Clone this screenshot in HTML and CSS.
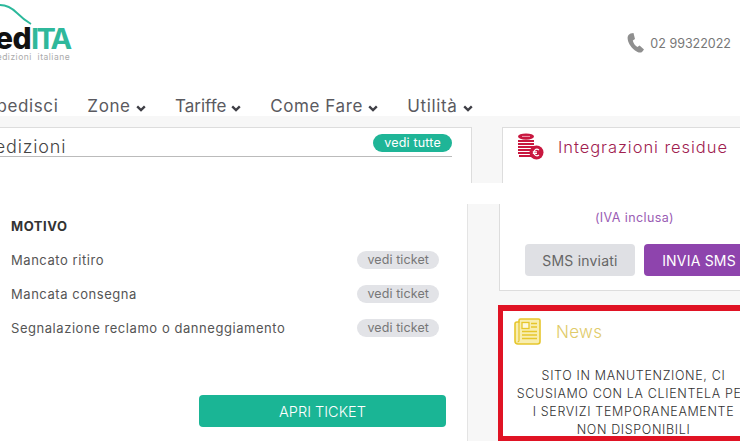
FILE: index.html
```html
<!DOCTYPE html>
<html lang="it">
<head>
    <meta charset="UTF-8">
    <meta name="viewport" content="width=device-width, initial-scale=1.0">
    <title>SpedITA - Spedizioni italiane</title>
    <link rel="stylesheet" href="styles.css">
</head>
<body>
    <header class="header">
        <div class="logo">
            <svg class="logo-arc" width="34" height="26" viewBox="0 0 34 26">
                <path d="M0 5 C7 5 12 8 17 13 C21 17 26 21 31 24" fill="none" stroke="#2bb89b" stroke-width="1.8"/>
            </svg>
            <div class="logo-name"><span class="logo-dark">Sped</span><span class="logo-teal">ITA</span></div>
            <div class="logo-sub">spedizioni&nbsp; italiane</div>
        </div>
        <div class="phone">
            <svg width="18" height="20" viewBox="0 0 18 20">
                <path d="M3.5 .5 L6.5 0 L8 6 L5.8 7.6 C6.2 10 8 12.8 10.4 14 L12.6 12.6 L17 16.6 L15 19 C13.5 20.2 10.5 19.6 8 17.6 C3 13.6 .5 8.5 .6 4.5 C.7 2.6 2 1.2 3.5 .5 Z" fill="#8f8f8f"/>
            </svg>
            <span>02 99322022</span>
        </div>
    </header>

    <nav class="nav">
        <a class="nav-item">Spedisci</a>
        <a class="nav-item">Zone <svg class="chev" width="10" height="7" viewBox="0 0 10 7"><path d="M1.2 1.4 L5 5 L8.8 1.4" fill="none" stroke="#3f3f46" stroke-width="2.4"/></svg></a>
        <a class="nav-item nav-tight">Tariffe <svg class="chev" width="10" height="7" viewBox="0 0 10 7"><path d="M1.2 1.4 L5 5 L8.8 1.4" fill="none" stroke="#3f3f46" stroke-width="2.4"/></svg></a>
        <a class="nav-item">Come Fare <svg class="chev" width="10" height="7" viewBox="0 0 10 7"><path d="M1.2 1.4 L5 5 L8.8 1.4" fill="none" stroke="#3f3f46" stroke-width="2.4"/></svg></a>
        <a class="nav-item">Utilità <svg class="chev" width="10" height="7" viewBox="0 0 10 7"><path d="M1.2 1.4 L5 5 L8.8 1.4" fill="none" stroke="#3f3f46" stroke-width="2.4"/></svg></a>
    </nav>

    <section class="top-row">
        <div class="card-ship">
            <div class="ship-head">
                <span class="ship-title">Ultime spedizioni</span>
                <span class="pill-teal">vedi tutte</span>
            </div>
        </div>
        <div class="card-int">
            <svg width="27" height="27" viewBox="0 0 27 27">
                <g fill="#c8173f">
                    <ellipse cx="9" cy="3.6" rx="8" ry="3.2"/>
                    <path d="M1 7 H17 V9 H1 Z M1 10 H17 V12 H1 Z M1 13 H17 V15 H1 Z M1 16 H17 V18 H1 Z M1 19 H15 V21 H1 Z M2 22 H15 V24 H2 Z"/>
                    <circle cx="19.5" cy="19.5" r="7"/>
                </g>
                <path d="M5 3.4 H13" stroke="#f2a0b4" stroke-width="1"/>
                <path d="M22 17 A3.2 3.2 0 1 0 22 22 M15.8 18.8 H20 M15.8 20.4 H20" fill="none" stroke="#fff" stroke-width="1.1"/>
            </svg>
            <span class="int-title">Integrazioni residue</span>
        </div>
    </section>

    <div class="band"></div>

    <section class="main-row">
        <div class="tickets">
            <div class="motivo">MOTIVO</div>
            <div class="ticket"><span>Mancato ritiro</span><span class="pill-grey">vedi ticket</span></div>
            <div class="ticket"><span>Mancata consegna</span><span class="pill-grey">vedi ticket</span></div>
            <div class="ticket"><span>Segnalazione reclamo o danneggiamento</span><span class="pill-grey">vedi ticket</span></div>
            <div class="ticket-foot"><button class="btn-teal">APRI TICKET</button></div>
        </div>
        <aside class="side">
            <div class="card-sms">
                <div class="iva">(IVA inclusa)</div>
                <div class="sms-btns">
                    <button class="btn-grey">SMS inviati</button>
                    <button class="btn-purple">INVIA SMS</button>
                </div>
            </div>
            <div class="card-news">
                <div class="news-head">
                    <svg width="27" height="27" viewBox="0 0 27 27">
                        <path d="M5 4 V2.5 Q5 1 6.5 1 H24.5 Q26 1 26 2.5 V23.5 Q26 26 23.5 26 H4 Q1 26 1 23 V6 Q1 4 3 4 Z" fill="#f8eeb0" stroke="#e6c62c" stroke-width="1.6"/>
                        <path d="M5 4 V22.5 Q5 24 3.5 24" fill="none" stroke="#e6c62c" stroke-width="1.2"/>
                        <rect x="8" y="4.5" width="7" height="6" fill="#fdf8dc" stroke="#e6c62c" stroke-width="1.3"/>
                        <path d="M17 5.5 H23 M17 9 H23 M8 13.5 H23 M8 17 H23 M8 20.5 H23" stroke="#e6c62c" stroke-width="1.3"/>
                    </svg>
                    <span class="news-title">News</span>
                </div>
                <p class="news-text">SITO IN MANUTENZIONE, CI SCUSIAMO CON LA CLIENTELA PER I SERVIZI TEMPORANEAMENTE NON DISPONIBILI</p>
            </div>
        </aside>
    </section>
</body>
</html>
```

FILE: styles.css
```css
html, body {
    height: 441px;
    overflow: hidden;
}

body {
    margin: 0;
    width: 740px;
    background-color: #f7f7f7;
    color: #444;
    font-family: Inter, "Noto Sans", sans-serif;
}

.header {
    height: 92px;
    background: #fff;
    display: flex;
    justify-content: space-between;
    overflow: hidden;
}

.logo {
    position: relative;
    margin-left: -43px;
    padding-top: 24px;
    width: 120px;
}

.logo-arc {
    position: absolute;
    left: 43px;
    top: 0;
}

.logo-name {
    font-size: 30px;
    line-height: 28px;
    font-weight: 800;
    letter-spacing: -0.5px;
}

.logo-dark {
    color: #111;
}

.logo-teal {
    color: #2fb89b;
    font-size: 29px;
    font-weight: 700;
    letter-spacing: -2.8px;
}

.logo-sub {
    margin-left: 29px;
    font-size: 8.5px;
    line-height: 9px;
    letter-spacing: 0.5px;
    color: #aaa;
    white-space: nowrap;
}

.phone {
    display: flex;
    align-items: center;
    gap: 5px;
    height: 86px;
    padding-right: 9px;
    font-size: 12.5px;
    color: #777;
}

.nav {
    height: 20px;
    padding-top: 4px;
    background: #fff;
    display: flex;
    gap: 29px;
    margin-left: -15px;
    font-size: 17px;
    line-height: 20px;
    letter-spacing: 0.6px;
    color: #5a5a60;
    white-space: nowrap;
}

.nav-tight {
    letter-spacing: 0;
}

.top-row {
    padding-top: 11px;
    height: 56px;
    display: flex;
}

.card-ship {
    width: 472px;
    background: #fff;
    border: 1px solid #ddd;
    border-left: none;
    border-bottom: none;
    box-sizing: border-box;
    flex: none;
}

.ship-head {
    display: flex;
    justify-content: space-between;
    align-items: center;
    width: 452px;
    height: 29px;
    border-bottom: 1px solid #bbb;
    box-sizing: border-box;
    padding-top: 1px;
}

.ship-title {
    align-self: flex-end;
    margin-left: -91px;
    font-size: 18px;
    line-height: 18px;
    letter-spacing: 0.8px;
    font-weight: 300;
    color: #444;
    white-space: nowrap;
}

.pill-teal {
    background: #1fb597;
    color: #fff;
    border-radius: 9px;
    font-size: 12.5px;
    letter-spacing: 0.2px;
    line-height: 18px;
    padding: 0 11px;
}

.card-int {
    margin-left: 30px;
    flex: 1;
    background: #fff;
    border: 1px solid #ddd;
    border-right: none;
    border-bottom: none;
    display: flex;
    align-items: flex-start;
    padding: 5px 0 0 14px;
    gap: 14px;
}

.int-title {
    font-size: 16.5px;
    letter-spacing: 0.95px;
    color: #a0204f;
    line-height: 28px;
    font-weight: 300;
}

.band {
    height: 21px;
    background: #fff;
}

.main-row {
    display: flex;
    height: 237px;
}

.tickets {
    width: 468px;
    flex: none;
    box-sizing: border-box;
    background: #fff;
    border-right: 1px solid #e4e4e4;
    padding: 14px 28px 0 11px;
    font-size: 13px;
    letter-spacing: 0.55px;
    color: #555;
}

.motivo {
    font-weight: 700;
    color: #333;
    line-height: 16px;
    margin-bottom: 9px;
}

.ticket {
    display: flex;
    justify-content: space-between;
    align-items: center;
    height: 34px;
    white-space: nowrap;
}

.pill-grey {
    background: #e2e3e7;
    color: #777;
    border-radius: 9px;
    font-size: 12.5px;
    letter-spacing: 0.1px;
    line-height: 18px;
    padding: 0 10px;
}

.ticket-foot {
    margin-top: 50px;
    margin-right: -7px;
    display: flex;
    justify-content: flex-end;
}

.btn-teal {
    width: 247px;
    height: 32px;
    background: #1ab595;
    color: #fff;
    border: none;
    border-radius: 4px;
    font-family: inherit;
    font-size: 14.5px;
    font-weight: 300;
}

.side {
    margin-left: 31px;
    width: 272px;
    flex: none;
}

.card-sms {
    height: 87px;
    box-sizing: border-box;
    background: #fff;
    border-bottom: 1px solid #ddd;
    border-left: 1px solid #ddd;
    text-align: center;
    padding-top: 6px;
    white-space: nowrap;
}

.iva {
    font-size: 12.5px;
    line-height: 16px;
    letter-spacing: 0.4px;
    color: #9a5cb4;
    padding-right: 2px;
}

.sms-btns {
    display: flex;
    gap: 9px;
    margin: 18px 0 0 25px;
}

.sms-btns button {
    width: 110px;
    height: 32px;
    flex: none;
    border: none;
    border-radius: 4px;
    font-family: inherit;
    font-size: 14px;
    letter-spacing: 0.2px;
}

.btn-grey {
    background: #dfe0e4;
    color: #666;
}

.sms-btns .btn-purple {
    background: #8e44ad;
    color: #fff;
}

.card-news {
    margin: 14px 0 0 -1px;
    height: 136px;
    box-sizing: border-box;
    background: #fff;
    border: 5px solid #e01324;
    border-top-width: 6px;
    border-right: none;
    overflow: hidden;
}

.news-head {
    display: flex;
    align-items: center;
    gap: 15px;
    padding: 7px 0 0 11px;
}

.news-title {
    font-size: 17px;
    letter-spacing: 0.3px;
    font-weight: 300;
    color: #dfcb6a;
}

.news-text {
    width: 235px;
    margin: 22px 0 0 13px;
    font-size: 12.5px;
    line-height: 18px;
    letter-spacing: 0.65px;
    font-weight: 300;
    text-align: center;
    color: #333;
}
```
